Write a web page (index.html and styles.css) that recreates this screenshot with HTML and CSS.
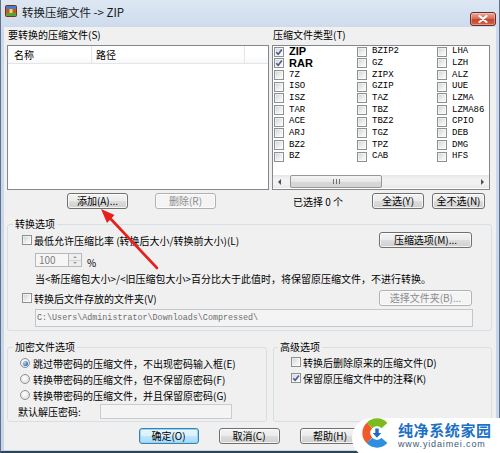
FILE: index.html
```html
<!DOCTYPE html>
<html lang="zh-CN">
<head>
<meta charset="utf-8">
<title>转换压缩文件 -> ZIP</title>
<link rel="stylesheet" href="styles.css">
</head>
<body>
<div class="window">
  <div class="titlebar">
    <svg class="app-icon" width="12" height="12" viewBox="0 0 12 12">
      <rect x="0.5" y="0.5" width="11" height="11" rx="1" fill="#c8562a" stroke="#7a3116"/>
      <rect x="1" y="1" width="10" height="3" fill="#3f7fd0"/>
      <rect x="1" y="8" width="10" height="3" fill="#54a43a"/>
      <rect x="4.5" y="4" width="3" height="4" fill="#f2d36b"/>
    </svg>
    <span class="title">转换压缩文件 -&gt; ZIP</span>
    <span class="close">
      <svg width="10" height="8" viewBox="0 0 10 8"><path d="M1.5 1 L8.5 7 M8.5 1 L1.5 7" stroke="#fff" stroke-width="2" stroke-linecap="round"/></svg>
    </span>
  </div>

  <div class="client">
    <div class="top">
      <div class="col">
        <div class="caption">要转换的压缩文件(S)</div>
        <div class="listbox">
          <div class="lv-head">
            <span class="h-name">名称</span>
            <span class="h-path">路径</span>
            <span class="h-rest"></span>
          </div>
        </div>
        <div class="row-btns left-btns">
          <button class="btn w61">添加(A)...</button>
          <button class="btn w61 disabled">删除(R)</button>
        </div>
      </div>

      <div class="col">
        <div class="caption">压缩文件类型(T)</div>
        <div class="typebox">
          <div class="types">
            <div class="ti"><span class="cb on"><svg viewBox="0 0 8 8"><path d="M1.2 4.2 L3.2 6.3 L6.9 1.4" fill="none" stroke="#4a5a94" stroke-width="1.6"/></svg></span><span class="bold">ZIP</span></div>
            <div class="ti"><span class="cb on"><svg viewBox="0 0 8 8"><path d="M1.2 4.2 L3.2 6.3 L6.9 1.4" fill="none" stroke="#4a5a94" stroke-width="1.6"/></svg></span><span class="bold">RAR</span></div>
            <div class="ti"><span class="cb"></span><span>7Z</span></div>
            <div class="ti"><span class="cb"></span><span>ISO</span></div>
            <div class="ti"><span class="cb"></span><span>ISZ</span></div>
            <div class="ti"><span class="cb"></span><span>TAR</span></div>
            <div class="ti"><span class="cb"></span><span>ACE</span></div>
            <div class="ti"><span class="cb"></span><span>ARJ</span></div>
            <div class="ti"><span class="cb"></span><span>BZ2</span></div>
            <div class="ti"><span class="cb"></span><span>BZ</span></div>

            <div class="ti"><span class="cb"></span><span>BZIP2</span></div>
            <div class="ti"><span class="cb"></span><span>GZ</span></div>
            <div class="ti"><span class="cb"></span><span>ZIPX</span></div>
            <div class="ti"><span class="cb"></span><span>GZIP</span></div>
            <div class="ti"><span class="cb"></span><span>TAZ</span></div>
            <div class="ti"><span class="cb"></span><span>TBZ</span></div>
            <div class="ti"><span class="cb"></span><span>TBZ2</span></div>
            <div class="ti"><span class="cb"></span><span>TGZ</span></div>
            <div class="ti"><span class="cb"></span><span>TPZ</span></div>
            <div class="ti"><span class="cb"></span><span>CAB</span></div>

            <div class="ti"><span class="cb"></span><span>LHA</span></div>
            <div class="ti"><span class="cb"></span><span>LZH</span></div>
            <div class="ti"><span class="cb"></span><span>ALZ</span></div>
            <div class="ti"><span class="cb"></span><span>UUE</span></div>
            <div class="ti"><span class="cb"></span><span>LZMA</span></div>
            <div class="ti"><span class="cb"></span><span>LZMA86</span></div>
            <div class="ti"><span class="cb"></span><span>CPIO</span></div>
            <div class="ti"><span class="cb"></span><span>DEB</span></div>
            <div class="ti"><span class="cb"></span><span>DMG</span></div>
            <div class="ti"><span class="cb"></span><span>HFS</span></div>
          </div>
          <div class="hscroll">
            <span class="sb-arrow"><span class="tri-left"></span></span>
            <span class="sb-thumb"><span class="grip"></span></span>
            <span class="sb-track"></span>
            <span class="sb-arrow"><span class="tri-right"></span></span>
          </div>
        </div>
        <div class="row-btns right-btns">
          <span class="count">已选择 0 个</span>
          <button class="btn w52 push">全选(Y)</button>
          <button class="btn w53">全不选(N)</button>
        </div>
      </div>
    </div>

    <fieldset class="group convert">
      <legend>转换选项</legend>
      <div class="crow r1">
        <span class="cb"></span>
        <span class="cb-text">最低允许压缩比率 (转换后大小/转换前大小)(L)</span>
        <button class="btn w93 push">压缩选项(M)...</button>
      </div>
      <div class="crow r2">
        <span class="spin"><span class="spin-val">100</span><span class="spin-btns"><span class="up"></span><span class="down"></span></span></span>
        <span class="pct">%</span>
      </div>
      <div class="crow r3">当&lt;新压缩包大小&gt;/&lt;旧压缩包大小&gt;百分比大于此值时，将保留原压缩文件，不进行转换。</div>
      <div class="crow r4">
        <span class="cb"></span>
        <span class="cb-text">转换后文件存放的文件夹(V)</span>
        <button class="btn w93 push disabled">选择文件夹(B)...</button>
      </div>
      <div class="crow r5">
        <span class="pathbox">C:\Users\Administrator\Downloads\Compressed\</span>
      </div>
    </fieldset>

    <div class="groups">
      <fieldset class="group enc">
        <legend>加密文件选项</legend>
        <div class="erow"><span class="rb on"></span><span class="rb-text">跳过带密码的压缩文件，不出现密码输入框(E)</span></div>
        <div class="erow"><span class="rb"></span><span class="rb-text">转换带密码的压缩文件，但不保留原密码(F)</span></div>
        <div class="erow"><span class="rb"></span><span class="rb-text">转换带密码的压缩文件，并且保留原密码(G)</span></div>
        <div class="erow pw"><span class="pw-label">默认解压密码:</span><span class="pw-box"></span></div>
      </fieldset>
      <fieldset class="group adv">
        <legend>高级选项</legend>
        <div class="arow"><span class="cb"></span><span class="cb-text">转换后删除原来的压缩文件(D)</span></div>
        <div class="arow"><span class="cb on"><svg viewBox="0 0 8 8"><path d="M1.2 4.2 L3.2 6.3 L6.9 1.4" fill="none" stroke="#4a5a94" stroke-width="1.6"/></svg></span><span class="cb-text">保留原压缩文件中的注释(K)</span></div>
      </fieldset>
    </div>

    <div class="footer">
      <button class="btn w60 default">确定(O)</button>
      <button class="btn w61">取消(C)</button>
      <button class="btn w61">帮助(H)</button>
    </div>
  </div>

  <svg class="arrow" width="500" height="453" viewBox="0 0 500 453">
    <line x1="157" y1="268" x2="108" y2="216" stroke="#e8201c" stroke-width="2.6" stroke-linecap="round"/>
    <polygon points="101,209 114.5,215 107,223" fill="#e8201c"/>
  </svg>

  <div class="wm">
    <svg class="wm-logo" width="30" height="32" viewBox="0 0 30 32">
      <path d="M7.6 8.6 A10 10 0 0 1 22.4 8.6" fill="none" stroke="#7cbb1c" stroke-width="8"/>
      <path d="M7.6 23.4 A10 10 0 0 1 7.6 8.6" fill="none" stroke="#f0592a" stroke-width="8"/>
      <path d="M22.4 23.4 A10 10 0 0 1 7.6 23.4" fill="none" stroke="#2d8fe0" stroke-width="8"/>
      <circle cx="15" cy="16" r="6.5" fill="#fff"/>
      <path d="M13.3 11.5 h3.4 v4.5 h2.6 l-4.3 4.8 l-4.3 -4.8 h2.6 z" fill="#1f6cc4"/>
    </svg>
    <div class="wm-text">
      <span class="wm-title">纯净系统家园</span>
      <span class="wm-url">www.yidaimei.com</span>
    </div>
  </div>
</div>
</body>
</html>
```

FILE: styles.css
```css
* { box-sizing: border-box; }
html, body { margin: 0; padding: 0; }
body {
  width: 500px;
  height: 453px;
  overflow: hidden;
  background: #fff;
  font-family: "Noto Sans CJK SC", "Noto Sans", sans-serif;
  font-size: 10px;
  color: #000;
}

.window {
  position: relative;
  width: 500px;
  height: 453px;
  display: flex;
  flex-direction: column;
  background: linear-gradient(#dde7f3, #cbdaec 30px, #c6d6ea);
  border-left: 1px solid #61718a;
  border-right: 1px solid #61718a;
  border-bottom: 2px solid #2c4656;
  padding: 0 3px 1px 3px;
}

/* title bar */
.titlebar {
  height: 27px;
  flex: none;
  display: flex;
  align-items: flex-start;
}
.app-icon { margin: 5px 0 0 1px; flex: none; }
.title {
  margin: 5px 0 0 5px;
  font-size: 11.5px;
  line-height: 14px;
  color: #1a1a1a;
}
.close {
  margin: 12px 0 0 auto;
  width: 26px;
  height: 14px;
  border: 1px solid #6e2b22;
  border-radius: 3px;
  background: linear-gradient(#e9a99a, #d7705b 45%, #c4432b 55%, #d2664d);
  display: flex;
  align-items: center;
  justify-content: center;
  box-shadow: inset 0 0 0 1px rgba(255,255,255,0.35);
}

/* client */
.client {
  flex: 1;
  background: #f0f0f0;
  padding: 1px 4px 0 3px;
  display: flex;
  flex-direction: column;
}

.top {
  display: grid;
  grid-template-columns: 262px 218px;
  column-gap: 3px;
}
.caption {
  height: 17px;
  line-height: 14px;
  padding-left: 1px;
  white-space: nowrap;
}
.listbox {
  height: 145px;
  border: 1px solid #828790;
  background: #fff;
}
.lv-head {
  height: 18px;
  display: flex;
  border-bottom: 1px solid #e3e5e8;
  background: linear-gradient(#fff, #fff 60%, #f7f8f9);
}
.lv-head span {
  line-height: 18px;
  padding-left: 6px;
  border-right: 1px solid #e3e5e8;
}
.h-name { width: 84px; }
.h-path { width: 153px; padding-left: 4px !important; }
.h-rest { flex: 1; border-right: none !important; }

.row-btns {
  margin-top: 3px;
  height: 16px;
  display: flex;
  align-items: center;
}
.left-btns { padding-left: 60px; gap: 27px; }
.right-btns { padding: 0 5px 0 21px; gap: 8px; }
.count { white-space: nowrap; }
.push { margin-left: auto; }

/* buttons */
.btn {
  height: 16px;
  padding: 0;
  font-family: inherit;
  font-size: 10px;
  line-height: 14px;
  color: #000;
  border: 1px solid #707070;
  border-radius: 3px;
  background: linear-gradient(#f3f3f3, #ebebeb 48%, #dddddd 52%, #cfcfcf);
  box-shadow: inset 0 0 0 1px rgba(255,255,255,0.75);
  white-space: nowrap;
  text-align: center;
}
.btn.disabled {
  color: #8d8d8d;
  border-color: #adb2b5;
  background: #f4f4f4;
}
.btn.default {
  border-color: #3c7fb1;
  box-shadow: inset 0 0 0 1px #8fd6f6;
  background: linear-gradient(#eaf6fd, #d9f0fc 48%, #bee6fd 52%, #a7d9f5);
}
.w52 { width: 52px; }
.w53 { width: 53px; }
.w60 { width: 60px; }
.w61 { width: 61px; }
.w93 { width: 93px; }

/* checkbox / radio */
.cb {
  flex: none;
  width: 10px;
  height: 10px;
  border: 1px solid #8e8f8f;
  background: linear-gradient(135deg, #cdd0d4, #eef0f1 60%, #fbfbfb);
  box-shadow: inset 0 0 0 1px rgba(255,255,255,0.5);
  display: flex;
  align-items: center;
  justify-content: center;
}
.cb svg { width: 8px; height: 8px; display: block; }
.rb {
  flex: none;
  width: 10px;
  height: 10px;
  border-radius: 50%;
  border: 1px solid #8e8f8f;
  background: radial-gradient(circle at 40% 35%, #ffffff, #d6d8da);
  display: flex;
  align-items: center;
  justify-content: center;
}
.rb.on::after {
  content: "";
  width: 5px;
  height: 5px;
  border-radius: 50%;
  background: radial-gradient(circle at 35% 35%, #b8dcf8, #2a6fc0 70%, #1a4f93);
}

/* type list */
.typebox {
  height: 145px;
  border: 1px solid #828790;
  background: #fff;
  display: flex;
  flex-direction: column;
}
.types {
  height: 129px;
  padding: 0 0 0 1px;
  display: grid;
  grid-template-rows: repeat(10, 11.67px);
  grid-auto-flow: column;
  grid-template-columns: 83px 80px 1fr;
}
.ti {
  display: flex;
  align-items: center;
  gap: 5px;
  font-family: "Liberation Mono", "DejaVu Sans Mono", monospace;
  font-size: 9px;
  line-height: 11px;
  white-space: nowrap;
}
.ti .bold {
  font-family: "Liberation Sans", Arial, sans-serif;
  font-weight: bold;
  font-size: 11px;
}
.hscroll {
  height: 13px;
  margin-top: 0;
  display: flex;
  align-items: stretch;
  background: linear-gradient(#e6e6e6, #f2f2f2 30%, #f2f2f2 70%, #e8e8e8);
}
.sb-arrow {
  width: 13px;
  display: flex;
  align-items: center;
  justify-content: center;
}
.tri-left {
  width: 0; height: 0;
  border-top: 3px solid transparent;
  border-bottom: 3px solid transparent;
  border-right: 3px solid #4f4f4f;
}
.tri-right {
  width: 0; height: 0;
  border-top: 3px solid transparent;
  border-bottom: 3px solid transparent;
  border-left: 3px solid #4f4f4f;
}
.sb-thumb {
  margin-left: 4px;
  width: 92px;
  border: 1px solid #979797;
  border-radius: 2px;
  background: linear-gradient(#f4f4f4, #e8e8e8 50%, #d9d9d9 51%, #d4d4d4);
  display: flex;
  align-items: center;
  justify-content: center;
}
.grip {
  width: 7px;
  height: 5px;
  background: linear-gradient(to right, #6f6f6f 1px, transparent 1px) 0 0 / 3px 5px repeat-x;
}
.sb-track { flex: 1; }

/* group boxes */
fieldset.group {
  margin: 0;
  padding: 0;
  min-width: 0;
  border: 1px solid #d5dfe5;
  border-radius: 3px;
}
fieldset.group legend {
  padding: 0 2px;
  height: 14px;
  line-height: 14px;
}
.convert { margin-top: 8px !important; padding: 0 18px 3px 14px !important; }
.convert legend { margin-left: -9px; }
.crow { display: flex; align-items: center; white-space: nowrap; }
.cb-text { margin-left: 2px; }
.r1 { margin-top: 1px; height: 16px; }
.r2 { margin-top: 5px; height: 14px; padding-left: 13px; }
.r3 { margin-top: 5px; height: 14px; line-height: 14px; padding-left: 13px; }
.r4 { margin-top: 4px; height: 16px; }
.r1 .btn, .r4 .btn { margin-right: 1px; }
.r5 { margin-top: 3px; height: 18px; padding-left: 13px; }

.spin {
  display: flex;
  height: 14px;
  width: 47px;
}
.spin-val {
  width: 33px;
  border: 1px solid #b5b8bd;
  border-right: none;
  background: #f6f6f6;
  color: #7d7d7d;
  line-height: 12px;
  padding-left: 3px;
  font-size: 10px;
}
.spin-btns {
  width: 14px;
  display: flex;
  flex-direction: column;
  border: 1px solid #b5b8bd;
  background: #eeeeee;
}
.spin-btns span {
  flex: 1;
  display: flex;
  align-items: center;
  justify-content: center;
}
.spin-btns .up { border-bottom: 1px solid #cfd1d4; }
.spin-btns .up::after {
  content: "";
  border-left: 2px solid transparent;
  border-right: 2px solid transparent;
  border-bottom: 2px solid #9a9a9a;
}
.spin-btns .down::after {
  content: "";
  border-left: 2px solid transparent;
  border-right: 2px solid transparent;
  border-top: 2px solid #9a9a9a;
}
.pct { margin-left: 5px; margin-top: 4px; }

.pathbox {
  flex: 1;
  height: 18px;
  border: 1px solid #c3c6cb;
  background: #f4f4f4;
  color: #6d6d6d;
  font-family: "Liberation Mono", "DejaVu Sans Mono", monospace;
  font-size: 8.4px;
  line-height: 16px;
  padding-left: 1px;
  white-space: nowrap;
  overflow: hidden;
}

.groups {
  margin-top: 9px;
  display: flex;
  gap: 6px;
}
.enc { width: 260px; flex: none; padding: 1px 0 2px 12px !important; }
.enc legend { margin-left: -7px; }
.adv { flex: 1; padding: 0 0 2px 17px !important; }
.adv legend { margin-left: -13px; }
.erow, .arow {
  height: 16px;
  display: flex;
  align-items: center;
  white-space: nowrap;
}
.rb-text { margin-left: 3px; }
.pw { margin-left: -2px; }
.pw-label { width: 82px; }
.pw-box {
  width: 132px;
  height: 15px;
  border: 1px solid #c9ccd1;
  background: #f4f4f4;
}

.footer {
  margin-top: 6px;
  display: flex;
  justify-content: center;
  gap: 20px;
}

/* overlays */
.arrow {
  position: absolute;
  left: -1px;
  top: 0;
  pointer-events: none;
}
.wm {
  position: absolute;
  left: 351px;
  top: 418px;
  width: 150px;
  height: 40px;
  background: #fff;
  border-radius: 20px 0 0 20px;
  display: flex;
  align-items: flex-start;
  padding: 0 0 0 10px;
  gap: 6px;
}
.wm-logo { margin-top: -1px; flex: none; }
.wm-text {
  display: flex;
  flex-direction: column;
  margin-top: 3px;
}
.wm-title {
  font-size: 15px;
  line-height: 18px;
  font-weight: bold;
  color: #1c70c6;
  letter-spacing: 0.6px;
  white-space: nowrap;
}
.wm-url {
  font-family: "Liberation Sans", Arial, sans-serif;
  font-size: 9px;
  line-height: 11px;
  color: #3d5c78;
  letter-spacing: 0.85px;
  white-space: nowrap;
}
```
